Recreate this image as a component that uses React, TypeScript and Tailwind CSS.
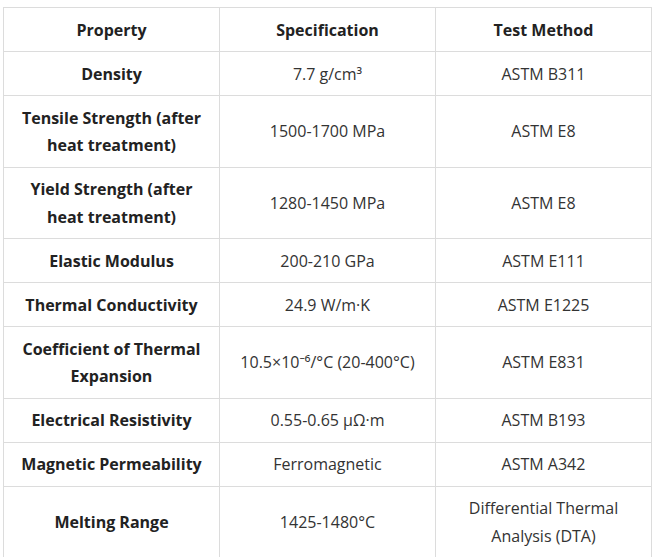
const rows: [string, string, string][] = [
  ["Density", "7.7 g/cm³", "ASTM B311"],
  ["Tensile Strength (after heat treatment)", "1500-1700 MPa", "ASTM E8"],
  ["Yield Strength (after heat treatment)", "1280-1450 MPa", "ASTM E8"],
  ["Elastic Modulus", "200-210 GPa", "ASTM E111"],
  ["Thermal Conductivity", "24.9 W/m·K", "ASTM E1225"],
  ["Coefficient of Thermal Expansion", "10.5×10⁻⁶/°C (20-400°C)", "ASTM E831"],
  ["Electrical Resistivity", "0.55-0.65 μΩ·m", "ASTM B193"],
  ["Magnetic Permeability", "Ferromagnetic", "ASTM A342"],
  ["Melting Range", "1425-1480°C", "Differential Thermal Analysis (DTA)"],
];

const cell =
  "border border-[#dcdcdc] px-[10px] pt-[8.5px] pb-[7px] text-center align-middle leading-[27.5px] w-[216px]";

export default function App() {
  return (
    <div
      className="bg-white min-h-[557px] pt-[7px] pl-[3px] text-[16px] text-[#333]"
      style={{ fontFamily: '"Open Sans", "Noto Sans", sans-serif' }}
    >
      <table className="border-collapse w-[649px] table-fixed">
        <thead>
          <tr>
            <th className={cn(cell, "font-bold text-[#222]")}>Property</th>
            <th className={cn(cell, "font-bold text-[#222]")}>Specification</th>
            <th className={cn(cell, "font-bold text-[#222]")}>Test Method</th>
          </tr>
        </thead>
        <tbody>
          {rows.map(([prop, spec, method]) => (
            <tr key={prop}>
              <td className={cn(cell, "font-bold text-[#222]")}>{prop}</td>
              <td className={cell}>{spec}</td>
              <td className={cell}>{method}</td>
            </tr>
          ))}
        </tbody>
      </table>
    </div>
  );
}

function cn(...parts: string[]) {
  return parts.join(" ");
}
